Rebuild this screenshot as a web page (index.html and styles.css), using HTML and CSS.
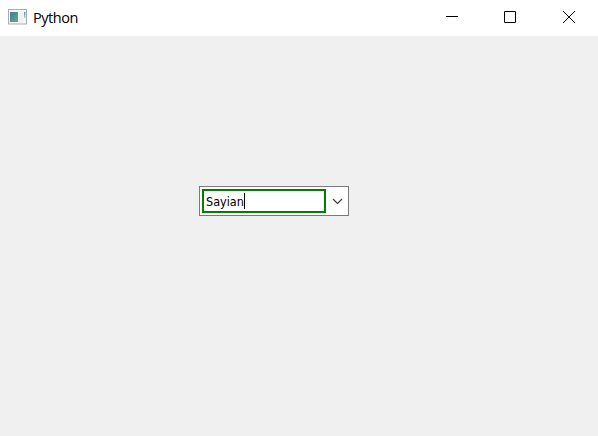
FILE: index.html
```
<!DOCTYPE html>
<html lang="en">
<head>
<meta charset="utf-8">
<title>Python</title>
<link rel="stylesheet" href="styles.css">
</head>
<body>
<div class="window">
  <header class="titlebar">
    <svg class="app-icon" width="20" height="16" viewBox="0 0 20 16">
      <defs>
        <linearGradient id="pane" x1="0" y1="0" x2="1" y2="1"><stop offset="0" stop-color="#4477a5"/><stop offset="1" stop-color="#5bae80"/></linearGradient>
        <linearGradient id="bar" x1="0" y1="0" x2="0" y2="1"><stop offset="0" stop-color="#5b8fc4"/><stop offset="1" stop-color="#a4dcb0"/></linearGradient>
      </defs>
      <rect x=".5" y=".5" width="18" height="14.5" fill="#f5f5f7" stroke="#a9abb2"/>
      <rect x="2" y="3" width="8" height="10" fill="url(#pane)"/>
      <rect x="11" y="3" width="4" height="10" fill="#eef0f2"/>
      <rect x="16" y="3" width="1.5" height="6" fill="url(#bar)"/>
    </svg>
    <span class="title">Python</span>
    <div class="controls">
      <svg width="58" height="36" viewBox="0 0 58 36"><path d="M22 16.5H34" class="line"/></svg>
      <svg width="58" height="36" viewBox="0 0 58 36"><path d="M22.5 11.5H33.5V22.5H22.5Z" class="line"/></svg>
      <svg width="58" height="36" viewBox="0 0 58 36"><path d="M23 11L35 23M35 11L23 23" class="line"/></svg>
    </div>
  </header>
  <main class="client">
    <div class="combo">
      <div class="edit"><span class="value">Sayian</span><span class="caret"></span></div>
      <svg class="arrow" width="22" height="28" viewBox="0 0 22 28"><path d="M7 12L11.5 16.5L16 12"/></svg>
    </div>
  </main>
</div>
</body>
</html>
```
FILE: styles.css
```
body {
  margin: 0;
}
.window {
  width: 598px;
  height: 436px;
  display: flex;
  flex-direction: column;
  overflow: hidden;
}
.titlebar {
  height: 36px;
  flex: none;
  display: flex;
  align-items: center;
  background: #fff;
  padding-left: 8px;
  box-sizing: border-box;
}
.app-icon {
  margin-bottom: 2px;
}
.title {
  margin-left: 5px;
  font: 14.5px/20px "Open Sans", sans-serif;
  letter-spacing: -0.45px;
  color: #000;
}
.controls {
  display: flex;
  margin-left: auto;
}
.line {
  fill: none;
  stroke: #000;
  stroke-width: 1;
}
.client {
  flex: 1;
  background: #f0f0f0;
  padding: 150px 0 0 199px;
}
.combo {
  width: 150px;
  height: 30px;
  box-sizing: border-box;
  display: flex;
  align-items: center;
  background: #fff;
  border: 1px solid #7a7a7a;
  padding-left: 2px;
}
.edit {
  width: 124px;
  height: 24px;
  box-sizing: border-box;
  display: flex;
  align-items: center;
  border: 2px solid #008000;
  padding-left: 2px;
}
.value {
  width: 38px;
  padding-top: 1px;
  font: 12.5px/16px "DejaVu Sans Condensed", "DejaVu Sans", sans-serif;
  font-stretch: condensed;
  white-space: nowrap;
  color: #000;
}
.caret {
  width: 1px;
  height: 16px;
  background: #000;
}
.arrow path {
  fill: none;
  stroke: #3c3c3c;
  stroke-width: 1.1;
}
```
